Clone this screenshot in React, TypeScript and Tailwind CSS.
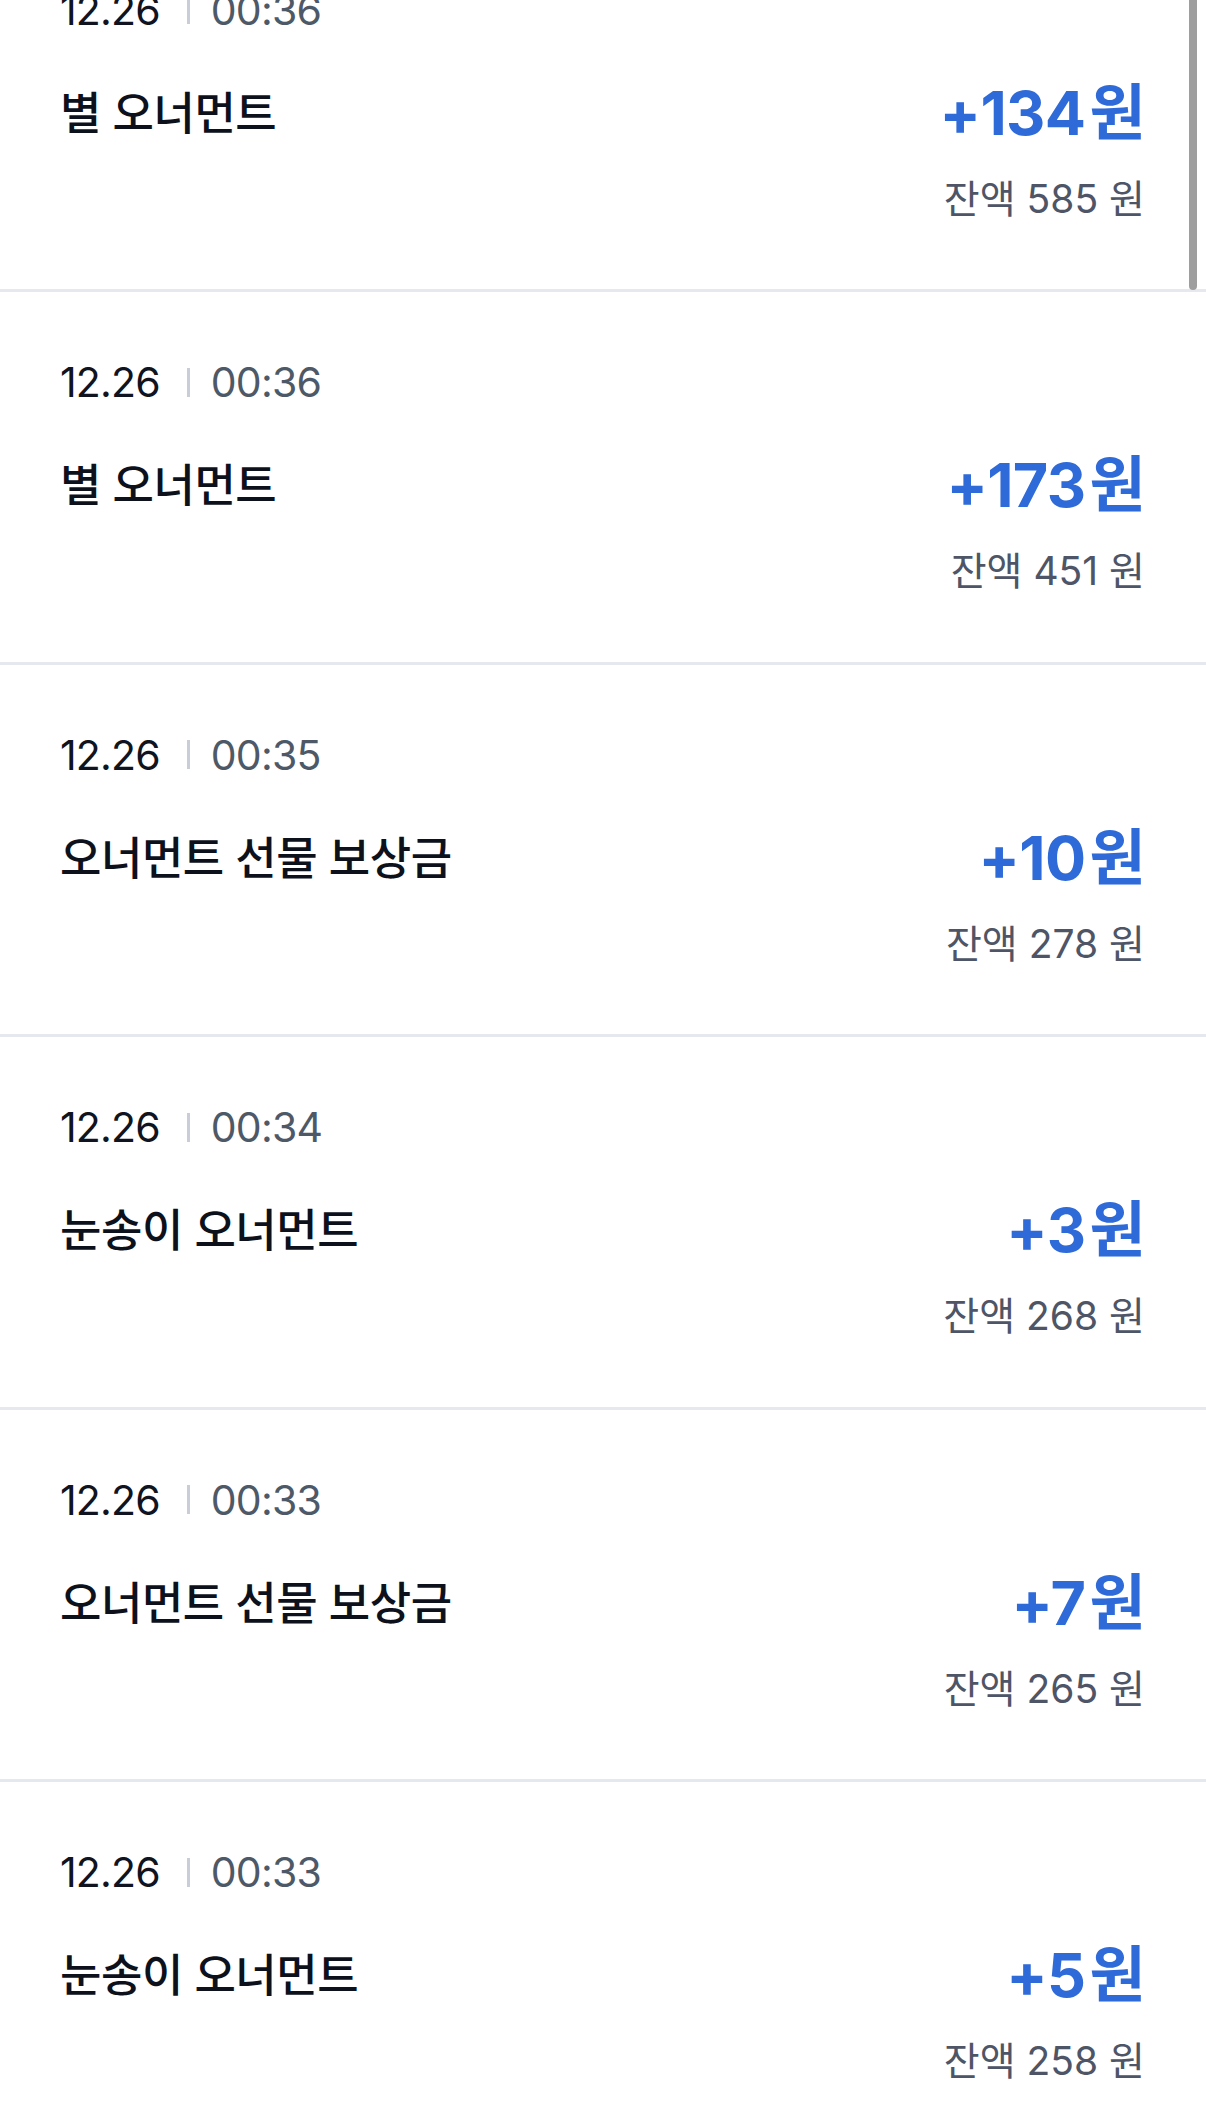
import React from "react";

type Entry = {
  date: string;
  time: string;
  title: string;
  amount: number;
  balance: number;
};

const entries: Entry[] = [
  { date: "12.26", time: "00:36", title: "별 오너먼트", amount: 134, balance: 585 },
  { date: "12.26", time: "00:36", title: "별 오너먼트", amount: 173, balance: 451 },
  { date: "12.26", time: "00:35", title: "오너먼트 선물 보상금", amount: 10, balance: 278 },
  { date: "12.26", time: "00:34", title: "눈송이 오너먼트", amount: 3, balance: 268 },
  { date: "12.26", time: "00:33", title: "오너먼트 선물 보상금", amount: 7, balance: 265 },
  { date: "12.26", time: "00:33", title: "눈송이 오너먼트", amount: 5, balance: 258 },
];

const FONT = {
  fontFamily: '"Inter", "Noto Sans CJK KR", "Noto Sans", sans-serif',
};

const Row = ({ item }: { item: Entry }) => (
  <div className="h-[372.5px] border-b-[3px] border-[#e5e8ef] pl-[60px] pr-[61px] pt-[66px]">
    {/* date | time */}
    <div className="flex items-center text-[41px] leading-[48px] tracking-[-0.02em]">
      <span className="text-[#0f1420]">{item.date}</span>
      <span className="ml-[27px] mr-[21px] h-[29px] w-[3px] bg-[#c9cdd8]" />
      <span className="text-[#4e5968]">{item.time}</span>
    </div>

    <div className="mt-[50px] flex h-[60px] items-center justify-between">
      <span className="text-[45px] font-medium text-[#0c111c] tracking-[-0.01em]">{item.title}</span>
      <span className="text-[61px] font-bold text-[#2f6ad9] tracking-[-0.01em]">
        +{item.amount}
        <span className="ml-[4px]">원</span>
      </span>
    </div>

    <div className="mt-[32px] text-right text-[39px] leading-[46px] text-[#4e5566]">
      잔액 {item.balance} 원
    </div>
  </div>
);

export default function App() {
  return (
    <div className="relative min-h-[2101px] overflow-hidden bg-white" style={FONT}>
      <div className="mt-[-80.5px]">
        {entries.map((item, i) => (
          <Row key={i} item={item} />
        ))}
      </div>

      {/* scroll indicator */}
      <div className="absolute right-[9px] top-[-12px] h-[302px] w-[8px] rounded-full bg-[#9e9e9e]" />
    </div>
  );
}
